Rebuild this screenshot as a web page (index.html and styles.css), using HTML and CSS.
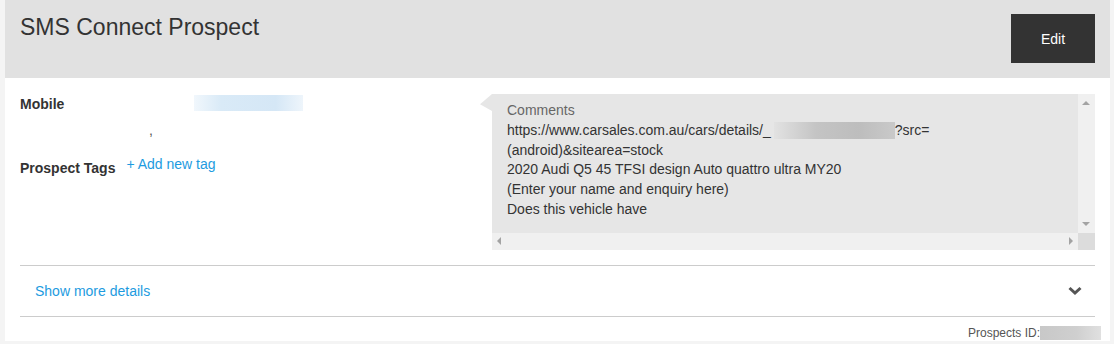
FILE: index.html
```html
<!DOCTYPE html>
<html lang="en">

<head>
  <meta charset="UTF-8">
  <meta name="viewport" content="width=device-width, initial-scale=1.0">
  <title>SMS Connect Prospect</title>
  <link rel="stylesheet" href="styles.css">
</head>

<body>
  <div class="panel">
    <header class="panel-header">
      <h1>SMS Connect Prospect</h1>
      <button class="btn-edit" type="button">Edit</button>
    </header>

    <section class="panel-body">
      <div class="details">
        <div class="detail-col">
          <div class="field">
            <span class="field-label">Mobile</span>
            <span class="redacted redacted-blue"></span>
          </div>
          <div class="field-extra">,</div>
          <div class="field field-tags">
            <span class="field-label">Prospect Tags</span>
            <a href="#" class="link">+ Add new tag</a>
          </div>
        </div>

        <div class="comments">
          <div class="comments-text">
            <div class="comments-title">Comments</div>
            <div>https://www.carsales.com.au/cars/details/_<span class="redacted redacted-grey"></span>?src=</div>
            <div>(android)&amp;sitearea=stock</div>
            <div>2020 Audi Q5 45 TFSI design Auto quattro ultra MY20</div>
            <div>(Enter your name and enquiry here)</div>
            <div>Does this vehicle have</div>
          </div>
          <div class="scroll-v">
            <span class="arrow arrow-up"></span>
            <span class="arrow arrow-down"></span>
          </div>
          <div class="scroll-h">
            <span class="arrow arrow-left"></span>
            <span class="arrow arrow-right"></span>
          </div>
          <div class="scroll-corner"></div>
        </div>
      </div>

      <div class="more">
        <a href="#" class="link">Show more details</a>
        <svg class="chevron" width="14" height="10" viewBox="0 0 14 10">
          <polyline points="1.5,2 7,7 12.5,2" fill="none" stroke="#555" stroke-width="3" />
        </svg>
      </div>
    </section>

    <footer class="panel-footer">
      Prospects ID:<span class="redacted redacted-id"></span>
    </footer>
  </div>
</body>

</html>
```

FILE: styles.css
```css
* {
  margin: 0;
  box-sizing: border-box;
}

body {
  background: #f4f4f4;
  font-family: 'Liberation Sans', Arial, sans-serif;
  font-size: 14px;
  color: #333;
}

.panel {
  margin-left: 5px;
  width: 1105px;
  background: #fff;
}

.panel-header {
  display: flex;
  justify-content: space-between;
  align-items: flex-start;
  padding: 14px 15px 15px;
  background: #e1e1e1;
}

.panel-header h1 {
  margin-top: 2px;
  font-size: 23px;
  font-weight: 400;
  line-height: 22px;
  color: #333;
}

.btn-edit {
  width: 84px;
  height: 49px;
  border: 0;
  padding-bottom: 1px;
  background: #333;
  color: #fff;
  font-family: inherit;
  font-size: 14px;
}

.panel-body {
  padding: 16px 15px 0;
}

.details {
  display: grid;
  grid-template-columns: 464px 1fr;
}

.field {
  display: flex;
  align-items: flex-start;
  line-height: 20px;
}

.field-label {
  font-weight: 700;
  color: #333;
}

.field .redacted-blue {
  margin-left: 130px;
  margin-top: 1px;
}

.field-extra {
  padding-left: 129px;
  margin-top: 6px;
  line-height: 20px;
  color: #555;
}

.field-tags {
  margin-top: 14px;
}

.field-tags .field-label {
  padding-top: 4px;
}

.field-tags .link {
  margin-left: 11px;
}

.link {
  color: #1d9be0;
  text-decoration: none;
}

.redacted {
  display: inline-block;
}

.redacted-blue {
  width: 109px;
  height: 16px;
  background: linear-gradient(90deg, #f1f7fc 0%, #d9eaf7 25%, #d5e7f6 75%, #eef5fb 100%);
}

.redacted-grey {
  width: 121px;
  height: 17px;
  margin-left: 3px;
  vertical-align: -4px;
  background: linear-gradient(90deg, #e2e2e2 0%, #c4c4c4 35%, #bdbdbd 70%, #c9c9c9 100%);
}

.redacted-id {
  width: 61px;
  height: 14px;
  vertical-align: -3px;
  background: linear-gradient(90deg, #c8c8c8 0%, #cfcfcf 60%, #e0e0e0 100%);
}

.comments {
  position: relative;
  display: grid;
  grid-template-columns: 1fr 17px;
  grid-template-rows: 139px 17px;
  margin-left: 8px;
  background: #e6e6e6;
}

.comments::before {
  content: '';
  position: absolute;
  left: -12px;
  top: 0;
  width: 12px;
  height: 17px;
  background: #e6e6e6;
  clip-path: polygon(100% 0, 0 60%, 100% 100%);
}

.comments-text {
  padding: 7px 15px 0;
  line-height: 19.8px;
  white-space: nowrap;
  overflow: hidden;
  color: #333;
}

.comments-title {
  color: #666;
}

.scroll-v,
.scroll-h {
  position: relative;
  background: #f0f0f0;
}

.scroll-corner {
  background: #dcdcdc;
}

.arrow {
  position: absolute;
  width: 0;
  height: 0;
  border: 4px solid transparent;
}

.arrow-up {
  left: 4px;
  top: 3px;
  border-bottom-color: #a3a3a3;
}

.arrow-down {
  left: 4px;
  bottom: 3px;
  border-top-color: #a3a3a3;
}

.arrow-left {
  left: 1px;
  top: 4px;
  border-right-color: #a3a3a3;
}

.arrow-right {
  right: 1px;
  top: 4px;
  border-left-color: #a3a3a3;
}

.more {
  display: flex;
  justify-content: space-between;
  align-items: center;
  height: 52px;
  margin-top: 15px;
  padding: 0 13px 0 15px;
  border-top: 1px solid #ccc;
  border-bottom: 1px solid #ccc;
}

.panel-footer {
  padding: 8px 9px 0 0;
  text-align: right;
  font-size: 12px;
  line-height: 16px;
  color: #555;
}
```
